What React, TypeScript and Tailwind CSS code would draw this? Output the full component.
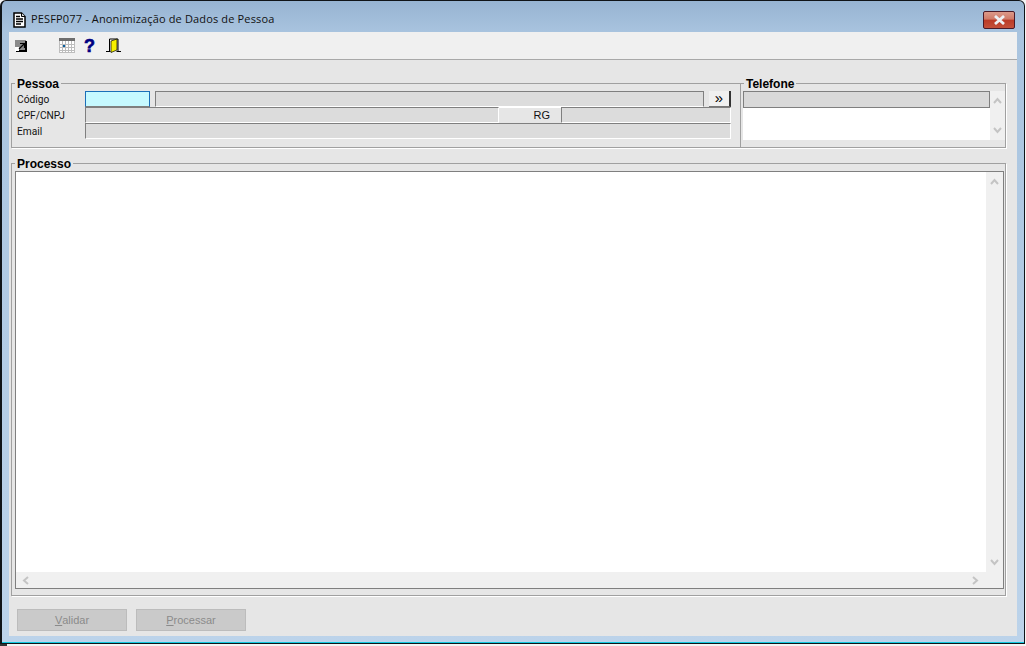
import React from "react";

const sunken = "border border-t-[#7f7f7f] border-l-[#7f7f7f] border-r-white border-b-white bg-[#dcdcdc]";

function Group({ title, className, children }: { title: string; className: string; children: React.ReactNode }) {
  return (
    <fieldset className={"border border-[#a0a0a0] min-w-0 shadow-[1px_1px_0_#ffffff] " + className}>
      <legend className="ml-[3px] translate-y-px px-[2px] text-[12px] font-bold leading-[12px] text-black [font-family:'Liberation_Sans',sans-serif]">{title}</legend>
      {children}
    </fieldset>
  );
}

function Chevron({ d }: { d: string }) {
  return (
    <svg width="9" height="7" viewBox="0 0 9 7" fill="none" stroke="#c4c4c4" strokeWidth="2">
      <path d={d} />
    </svg>
  );
}

function HChevron({ d }: { d: string }) {
  return (
    <svg width="7" height="9" viewBox="0 0 7 9" fill="none" stroke="#c4c4c4" strokeWidth="2">
      <path d={d} />
    </svg>
  );
}

function VScroll({ className }: { className: string }) {
  return (
    <div className={"flex flex-col items-center justify-between bg-[#f0f0f0] " + className}>
      <Chevron d="M1 6 L4.5 2 L8 6" />
      <Chevron d="M1 1 L4.5 5 L8 1" />
    </div>
  );
}

function Row({ label, children }: { label: string; children: React.ReactNode }) {
  return (
    <div className="flex h-4 items-stretch">
      <div className="w-[72px] pl-[4px] pt-px text-[10.2px] leading-[16px] text-[#111] [font-family:'Roboto',sans-serif]">{label}</div>
      {children}
    </div>
  );
}

function DocIcon() {
  return (
    <svg width="13" height="16" viewBox="0 0 13 16" className="mr-[5px] ml-[4px]">
      <path d="M1 1 H8.5 L12 4.5 V15 H1 Z" fill="#fff" stroke="#000" strokeWidth="1.5" />
      <path d="M3 4.5 H7 M3 7 H10 M3 9.5 H10 M3 12 H8" stroke="#000" strokeWidth="1.3" />
      <path d="M8.5 1 V4.5 H12" fill="#ddd" stroke="#000" />
    </svg>
  );
}

function ArrowIcon() {
  return (
    <svg width="12" height="12" viewBox="0 0 12 12">
      <rect x="0" y="0" width="11" height="11" fill="#8a8a8a" />
      <rect x="10" y="1" width="2" height="11" fill="#000" />
      <rect x="1" y="10" width="11" height="2" fill="#000" />
      <rect x="0" y="7" width="4" height="4" fill="#fff" />
      <path d="M4 9 L9 4 M5 3.5 H9.5 V8" stroke="#000" strokeWidth="1.2" fill="none" />
    </svg>
  );
}

function CalendarIcon() {
  return (
    <svg width="16" height="15" viewBox="0 0 16 15">
      <rect x="0" y="0" width="16" height="15" fill="#fff" />
      <rect x="0" y="0" width="16" height="3" fill="#6e6e6e" />
      <path d="M0.5 3 V15 M3.5 3 V15 M6.5 3 V15 M9.5 3 V15 M12.5 3 V15 M15.5 3 V15 M0 6.5 H16 M0 9.5 H16 M0 12.5 H16 M0 14.5 H16" stroke="#bdbdbd" />
      <rect x="4" y="7" width="2" height="2" fill="#0a5f9e" />
    </svg>
  );
}

function DoorIcon() {
  return (
    <svg width="15" height="15" viewBox="0 0 15 15">
      <path d="M0 13.5 H4.5 M10.5 13.5 H15" stroke="#000" />
      <path d="M3.5 13 V1 H12 V13" stroke="#000" fill="none" />
      <path d="M5 3 L11 1 V12 L5 14.5 Z" fill="#f6f000" stroke="#000" strokeWidth="0.7" />
    </svg>
  );
}

function CloseButton() {
  return (
    <div className="flex h-[18px] w-[32px] items-center justify-center rounded-[2px] border border-[#4a1a28] bg-[linear-gradient(#dc9a8a_0%,#cf7a68_45%,#bb3a26_50%,#c4503a_100%)]">
      <svg width="13" height="10" viewBox="0 0 13 10">
        <path d="M2 1 L11 9 M11 1 L2 9" stroke="#eef0f4" strokeWidth="2.8" />
      </svg>
    </div>
  );
}

function FormButton({ mn, rest }: { mn: string; rest: string }) {
  return (
    <div className="flex h-[22px] w-[110px] items-center justify-center border border-[#bcbcbc] bg-[#cacaca] text-[11px] text-[#8a8a8a]">
      <span className="underline">{mn}</span>
      {rest}
    </div>
  );
}

export default function App() {
  return (
    <div className="h-[646px] w-[1026px] overflow-hidden bg-[#f4f4f4] [font-family:'Liberation_Sans',sans-serif]">
      <div className="flex h-[644px] w-[1025px] flex-col rounded-t-[6px] border border-[#101418] border-l-2 bg-[linear-gradient(#97b4d2_0%,#a9c4df_5%,#bcd3ea_100%)]">
        <div className="flex h-[31px] items-center justify-between pl-[7px] pr-[9px] pt-[6px]">
          <div className="flex items-center">
            <DocIcon />
            <span className="text-[11px] tracking-[0.15px] text-[#111] [font-family:'Open_Sans',sans-serif]">PESFP077 - Anonimização de Dados de Pessoa</span>
          </div>
          <CloseButton />
        </div>
        <div className="mx-[7px] flex min-h-0 flex-1 flex-col bg-[#e6e6e6]">
          <div className="flex h-[28px] items-center border-b border-[#a8a8a8] bg-[#f0f0f0]">
            <div className="ml-[6px] flex w-[44px]"><ArrowIcon /></div>
            <CalendarIcon />
            <span className="ml-[9px] w-[22px] text-[18px] leading-none font-bold text-[#000080] [font-family:'Liberation_Sans',sans-serif] [-webkit-text-stroke:0.6px_#000080]">?</span>
            <DoorIcon />
          </div>
          <div className="flex h-[575px] flex-col px-[2px] pt-[17px]">
            <div className="flex h-[71px] w-[996px]">
              <Group title="Pessoa" className="h-[71px] w-[729px] border-r-0">
                <div className="pl-px pt-[2px]">
                  <Row label="Código">
                    <div className="h-4 w-[65px] border border-[#1b6fb8] border-b-[#7f7f7f] bg-[#c6f9ff]" />
                    <div className="ml-[5px] h-4 w-[549px] border border-[#7f7f7f] border-b-white bg-[#dcdcdc]" />
                    <div className="ml-[5px] flex h-4 w-[22px] items-center justify-center border-r-2 border-b border-r-[#333] border-b-[#777] bg-[#f0f0f0] pb-[2px] text-[15px] leading-none text-black">»</div>
                  </Row>
                  <Row label="CPF/CNPJ">
                    <div className={"h-4 w-[414px] " + sunken} />
                    <div className="flex h-4 w-[62px] items-center justify-end border-t border-white bg-[#e6e6e6] pr-[11px] text-[11px] text-[#111]">RG</div>
                    <div className={"h-4 w-[170px] " + sunken} />
                  </Row>
                  <Row label="Email">
                    <div className={"h-4 w-[646px] " + sunken} />
                  </Row>
                </div>
              </Group>
              <Group title="Telefone" className="h-[71px] w-[266px]">
                <div className="flex h-[51px] w-[264px] pl-[2px] pt-[2px]">
                  <div className="w-[247px] bg-white">
                    <div className="h-[17px] border border-[#7f7f7f] bg-[#d9d9d9]" />
                  </div>
                  <VScroll className="w-[15px] py-[6px]" />
                </div>
              </Group>
            </div>
            <Group title="Processo" className="mt-[9px] h-[439px] w-[995px]">
              <div className="pl-[3px] pt-[2px]">
                <div className="flex h-[418px] w-[989px] flex-col border border-[#7f7f7f] bg-white">
                  <div className="flex min-h-0 flex-1">
                    <div className="flex-1 bg-white" />
                    <VScroll className="w-[17px] py-[6px]" />
                  </div>
                  <div className="flex h-[16px] items-center justify-between bg-[#f0f0f0] pl-[6px] pr-[24px]">
                    <HChevron d="M6 1 L2 4.5 L6 8" />
                    <HChevron d="M1 1 L5 4.5 L1 8" />
                  </div>
                </div>
              </div>
            </Group>
            <div className="mt-[13px] flex gap-[9px] pl-[6px]">
              <FormButton mn="V" rest="alidar" />
              <FormButton mn="P" rest="rocessar" />
            </div>
          </div>
        </div>
        <div className="h-[6px]" />
        <div className="h-px bg-[#12c8e0]" />
      </div>
      <div className="h-[2px] w-[7px] bg-[#333333]" />
    </div>
  );
}
